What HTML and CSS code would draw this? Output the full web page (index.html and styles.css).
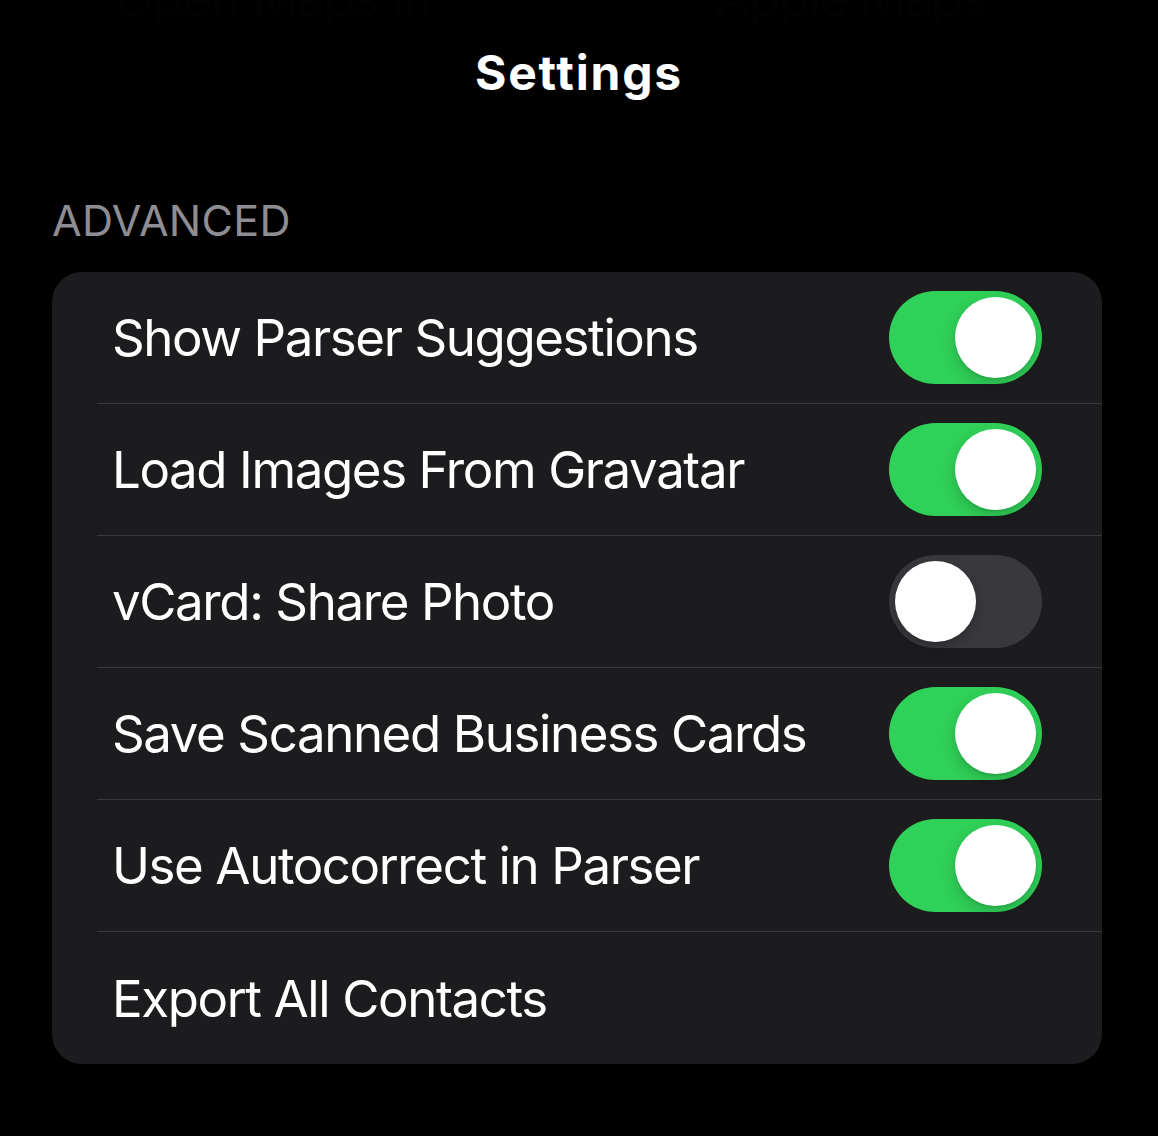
FILE: index.html
```html
<!DOCTYPE html>
<html lang="en">
<head>
<meta charset="utf-8">
<title>Settings</title>
<link rel="stylesheet" href="styles.css">
</head>
<body>
<div class="screen">
  <div class="ghost-card">
    <div class="ghost-row">
      <span class="ghost-label">Open Maps in</span>
      <span class="ghost-value">Apple Maps</span>
    </div>
  </div>

  <header class="navbar">
    <h1 class="nav-title">Settings</h1>
  </header>

  <h2 class="section-header">ADVANCED</h2>

  <div class="card">
    <div class="row">
      <span class="row-label">Show Parser Suggestions</span>
      <span class="switch on"><span class="knob"></span></span>
    </div>
    <div class="row">
      <span class="row-label">Load Images From Gravatar</span>
      <span class="switch on"><span class="knob"></span></span>
    </div>
    <div class="row">
      <span class="row-label">vCard: Share Photo</span>
      <span class="switch off"><span class="knob"></span></span>
    </div>
    <div class="row">
      <span class="row-label">Save Scanned Business Cards</span>
      <span class="switch on"><span class="knob"></span></span>
    </div>
    <div class="row">
      <span class="row-label">Use Autocorrect in Parser</span>
      <span class="switch on"><span class="knob"></span></span>
    </div>
    <div class="row last">
      <span class="row-label">Export All Contacts</span>
    </div>
  </div>
</div>
</body>
</html>
```

FILE: styles.css
```css
* { box-sizing: border-box; }

html, body {
  margin: 0;
  padding: 0;
  background: #000;
}

body {
  font-family: Inter, "Noto Sans", "Liberation Sans", sans-serif;
  color: #fff;
  -webkit-font-smoothing: antialiased;
}

.screen {
  position: relative;
  width: 1158px;
  height: 1136px;
  overflow: hidden;
  padding: 0 56px 0 52px;
}

/* previous group, scrolled up under the bar */
.ghost-card {
  margin-top: -68px;
  height: 130px;
  background: #050505;
  border-radius: 30px;
  border: 1px solid #0c0c0c;
}

.ghost-row {
  height: 100%;
  display: flex;
  align-items: center;
  padding-left: 62px;
  font-size: 51px;
  color: #121212;
  letter-spacing: -1.5px;
}

.ghost-label { width: 600px; }
.ghost-value { color: #101010; }

.navbar {
  position: absolute;
  left: 0;
  top: 0;
  width: 100%;
  height: 130px;
  background: rgba(0, 0, 0, 0.88);
  display: flex;
  justify-content: center;
}

.nav-title {
  margin: 44px 0 0;
  font-size: 48px;
  line-height: 58px;
  font-weight: 700;
  letter-spacing: 1.8px;
  color: #fff;
}

.section-header {
  margin: 132px 0 25px 0;
  font-size: 43px;
  line-height: 53px;
  font-weight: 400;
  color: #8d8d93;
  letter-spacing: 0.3px;
}

.card {
  background: #1c1c1e;
  border-radius: 30px;
  overflow: hidden;
}

.row {
  height: 132px;
  margin-left: 45px;
  padding: 0 60px 0 15px;
  display: flex;
  align-items: center;
  justify-content: space-between;
  border-bottom: 1px solid #3a3a3c;
}

.row.last { border-bottom: none; }

.row-label {
  font-size: 51px;
  letter-spacing: -1.4px;
  color: #fff;
}

.switch {
  position: relative;
  width: 153px;
  height: 93px;
  border-radius: 47px;
  flex: none;
}

.switch.on { background: #30d158; }
.switch.off { background: #39393d; }

.knob {
  position: absolute;
  top: 6px;
  width: 81px;
  height: 81px;
  border-radius: 50%;
  background: #fff;
  box-shadow: 0 6px 16px rgba(0, 0, 0, 0.18), 0 2px 2px rgba(0, 0, 0, 0.08);
}

.switch.on .knob { right: 6px; }
.switch.off .knob { left: 6px; }
```
